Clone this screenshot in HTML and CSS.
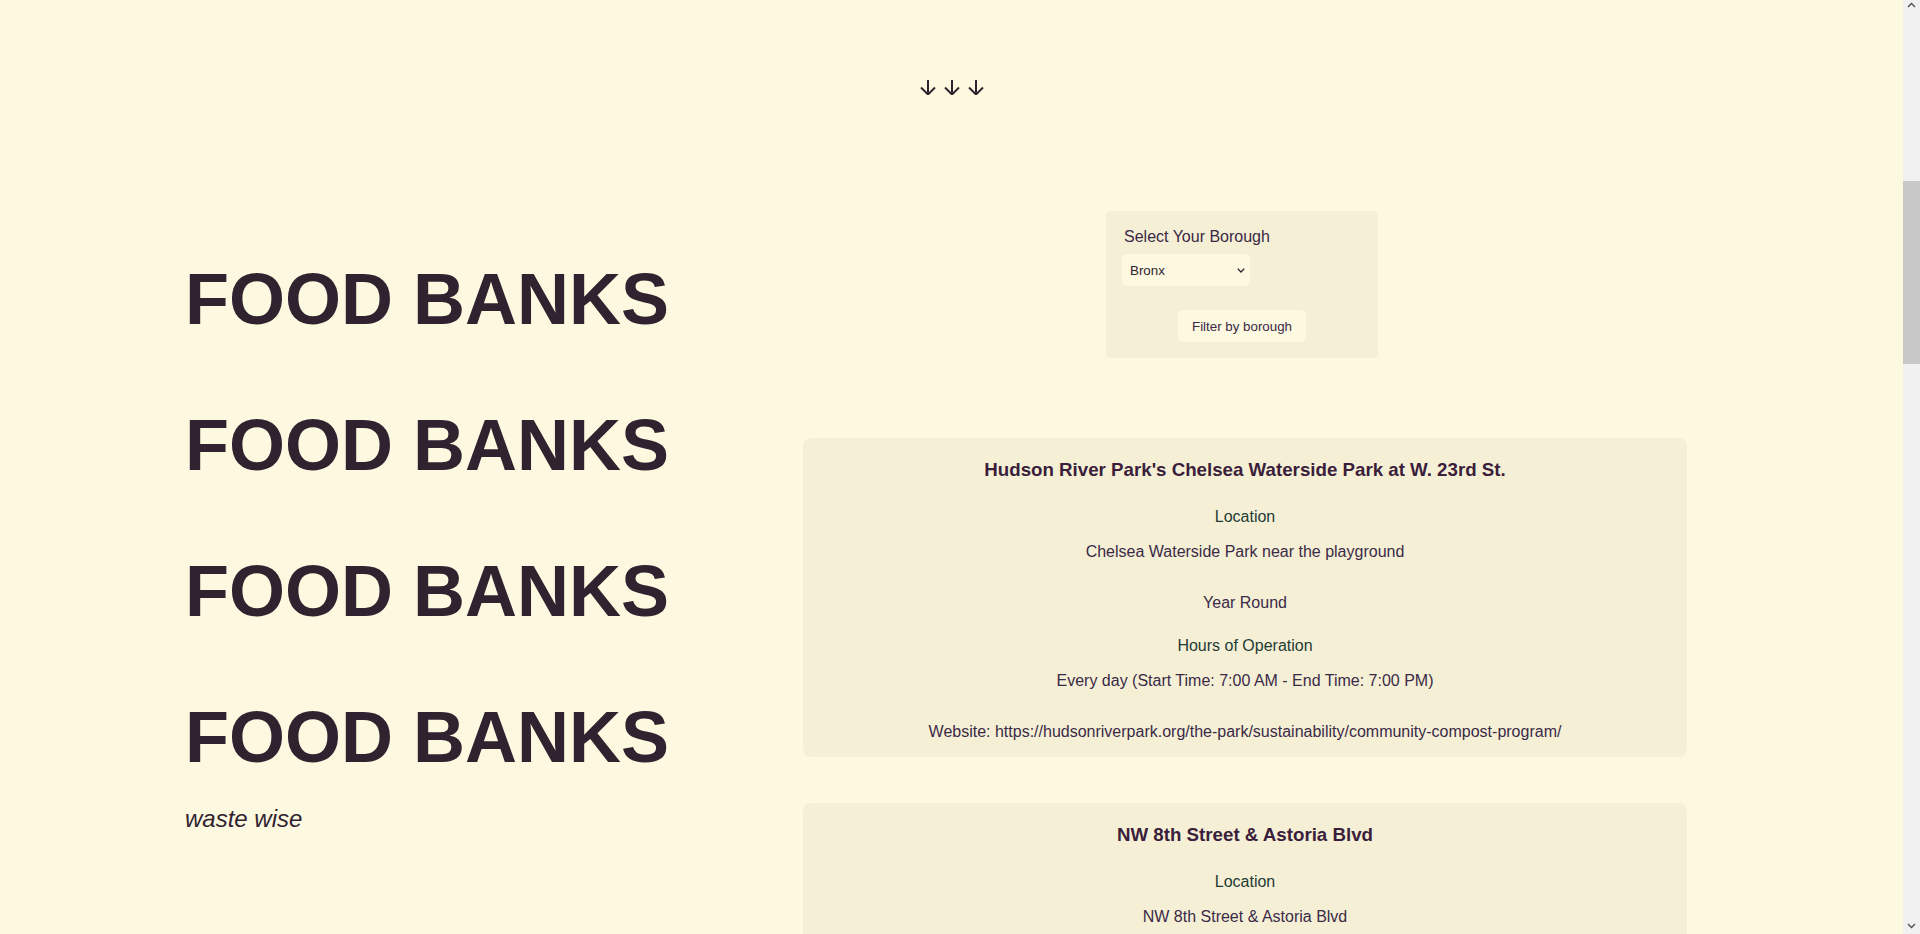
FILE: index.html
```html
<!DOCTYPE html>
<html lang="en">
<head>
<meta charset="utf-8">
<title>Food Banks — waste wise</title>
<link rel="stylesheet" href="styles.css">
</head>
<body>
<div class="page">
  <div class="arrows" aria-hidden="true">
    <svg class="arrow" viewBox="0 0 16 16" width="16" height="16"><path d="M8 1V15.5M1 8.5L8 15.5L15 8.5" fill="none" stroke="currentColor" stroke-width="2"/></svg>
    <svg class="arrow" viewBox="0 0 16 16" width="16" height="16"><path d="M8 1V15.5M1 8.5L8 15.5L15 8.5" fill="none" stroke="currentColor" stroke-width="2"/></svg>
    <svg class="arrow" viewBox="0 0 16 16" width="16" height="16"><path d="M8 1V15.5M1 8.5L8 15.5L15 8.5" fill="none" stroke="currentColor" stroke-width="2"/></svg>
  </div>
  <main class="main">
    <section class="intro">
      <h1 class="headline">FOOD BANKS</h1>
      <h1 class="headline">FOOD BANKS</h1>
      <h1 class="headline">FOOD BANKS</h1>
      <h1 class="headline">FOOD BANKS</h1>
      <p class="tagline">waste wise</p>
    </section>
    <section class="listing">
      <form class="filter">
        <label class="filter-label" for="borough">Select Your Borough</label>
        <div class="select-wrap">
          <select class="select" id="borough">
            <option>Bronx</option>
            <option>Brooklyn</option>
            <option>Manhattan</option>
            <option>Queens</option>
            <option>Staten Island</option>
          </select>
          <svg class="chev" viewBox="0 0 8 5" width="8" height="5"><path d="M0.8 0.8L4 4L7.2 0.8" fill="none" stroke="currentColor" stroke-width="1.3"/></svg>
        </div>
        <button class="filter-btn" type="button">Filter by borough</button>
      </form>

      <article class="card">
        <h2 class="card-title">Hudson River Park's Chelsea Waterside Park at W. 23rd St.</h2>
        <p class="label">Location</p>
        <p class="value">Chelsea Waterside Park near the playground</p>
        <p class="season">Year Round</p>
        <p class="label label-hours">Hours of Operation</p>
        <p class="value value-hours">Every day (Start Time: 7:00 AM - End Time: 7:00 PM)</p>
        <p class="website">Website: https://hudsonriverpark.org/the-park/sustainability/community-compost-program/</p>
      </article>

      <article class="card">
        <h2 class="card-title">NW 8th Street &amp; Astoria Blvd</h2>
        <p class="label">Location</p>
        <p class="value">NW 8th Street &amp; Astoria Blvd</p>
        <p class="season">Year Round</p>
        <p class="label label-hours">Hours of Operation</p>
        <p class="value value-hours">Saturday (Start Time: 9:00 AM - End Time: 1:00 PM)</p>
        <p class="website">Website: https://www.grownyc.org/compost</p>
      </article>
    </section>
  </main>
</div>

<div class="scrollbar" aria-hidden="true">
  <svg class="sb-up" viewBox="0 0 17 10" width="17" height="10"><path d="M5 7L8.5 3.5L12 7" fill="none" stroke="currentColor" stroke-width="1.4"/></svg>
  <div class="sb-thumb"></div>
  <svg class="sb-down" viewBox="0 0 17 10" width="17" height="10"><path d="M5 3L8.5 6.5L12 3" fill="none" stroke="currentColor" stroke-width="1.4"/></svg>
</div>
</body>
</html>
```

FILE: styles.css
```css
html, body {
  margin: 0;
  padding: 0;
}

body {
  background: #fdf8e0;
  color: #30232f;
  font-family: "Liberation Sans", Arial, sans-serif;
}

.page {
  margin-right: 17px;
}

.arrows {
  display: flex;
  justify-content: center;
  gap: 8px;
  padding-top: 79px;
  margin-bottom: 116px;
  color: #2e2430;
}

.arrow {
  display: block;
}

.main {
  display: flex;
  align-items: flex-start;
  padding-left: 185px;
  padding-bottom: 60px;
}

.intro {
  width: 618px;
  padding-top: 47px;
}

.headline {
  margin: 0 0 63px;
  font-size: 72px;
  line-height: 83px;
  font-weight: 700;
  color: #30232f;
}

.headline:last-of-type {
  margin-bottom: 26px;
}

.tagline {
  margin: 0;
  font-size: 24px;
  font-style: italic;
  color: #30232f;
}

.listing {
  width: 884px;
  display: flex;
  flex-direction: column;
}

.filter {
  width: 272px;
  box-sizing: border-box;
  margin: 0 0 80px 303px;
  padding: 17px 16px 16px;
  background: #f5f0d5;
  border-radius: 4px;
}

.filter-label {
  display: block;
  padding-left: 2px;
  font-size: 16px;
  color: #3a2846;
}

.select-wrap {
  position: relative;
  width: 128px;
  margin-top: 8px;
}

.select {
  display: block;
  width: 128px;
  height: 32px;
  box-sizing: border-box;
  padding: 0 20px 0 8px;
  border: none;
  border-radius: 5px;
  background: #fdf8e0;
  color: #2e2430;
  font-family: "Liberation Sans", Arial, sans-serif;
  font-size: 13.33px;
  -webkit-appearance: none;
  appearance: none;
}

.chev {
  position: absolute;
  right: 5px;
  top: 14px;
  color: #2e2430;
  pointer-events: none;
}

.filter-btn {
  display: block;
  width: 128px;
  height: 32px;
  margin: 24px auto 0;
  padding: 0;
  border: none;
  border-radius: 5px;
  background: #fdf8e0;
  color: #3a2846;
  font-family: "Liberation Sans", Arial, sans-serif;
  font-size: 13.33px;
}

.card {
  background: #f5f0d5;
  border-radius: 8px;
  padding: 21px 16px 15px;
  margin-bottom: 46px;
  text-align: center;
}

.card-title {
  margin: 0;
  font-size: 18.72px;
  line-height: 22px;
  font-weight: 700;
  color: #3a1e3b;
}

.card p {
  margin: 0;
  font-size: 16px;
  line-height: 20px;
  color: #3b2a48;
}

.card .label {
  margin-top: 26px;
  color: #1f3b36;
}

.card .value {
  margin-top: 15px;
}

.card .season {
  margin-top: 31px;
}

.card .label-hours {
  margin-top: 23px;
}

.card .value-hours {
  margin-top: 15px;
}

.card .website {
  margin-top: 31px;
}

/* imitation of the browser's classic vertical scrollbar, drawn over the right edge */
.scrollbar {
  position: fixed;
  top: 0;
  right: 0;
  width: 17px;
  height: 100vh;
  background: #f1f1f1;
  color: #505050;
}

.sb-up {
  position: absolute;
  top: 0;
  left: 0;
  display: block;
}

.sb-down {
  position: absolute;
  bottom: 3px;
  left: 0;
  display: block;
}

.sb-thumb {
  position: absolute;
  top: 181px;
  left: 0;
  width: 17px;
  height: 183px;
  background: #c8c8c8;
}
```
